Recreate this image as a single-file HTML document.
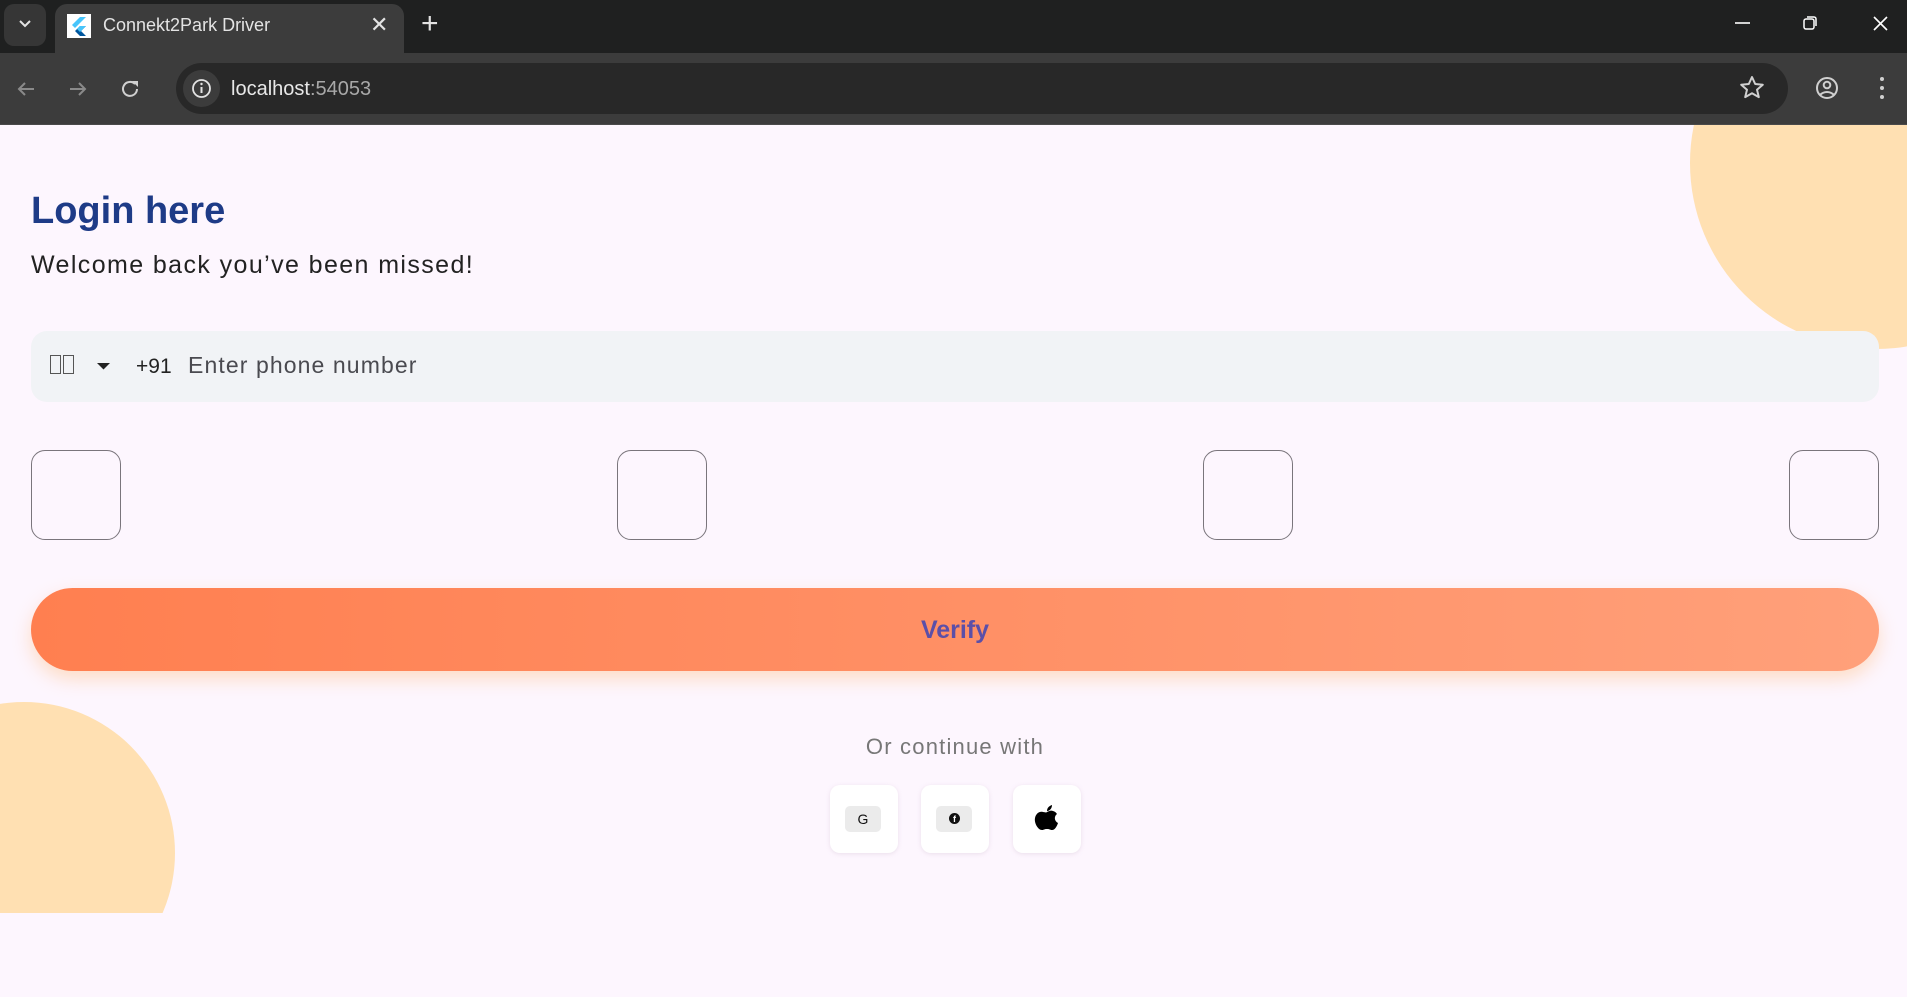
<!DOCTYPE html>
<html><head><meta charset="utf-8"><style>
*{margin:0;padding:0;box-sizing:border-box}
body{width:1907px;height:997px;overflow:hidden;background:#fdf6fe;font-family:"Liberation Sans",sans-serif;position:relative}
.abs{position:absolute}
#top{left:0;top:0;width:1907px;height:53px;background:#1f2020}
#tool{left:0;top:53px;width:1907px;height:72px;background:#3c3c3c;border-bottom:1px solid #4a4a4a}
#tab{left:55px;top:4px;width:349px;height:56px;background:#3c3c3c;border-radius:12px 12px 0 0}
#page{left:0;top:125px;width:1907px;height:872px;background:#fdf6fe;overflow:hidden}
.otp{position:absolute;top:325px;width:90px;height:90px;border:1.6px solid #7a757c;border-radius:14px}
.soc{position:absolute;top:660px;width:68px;height:68px;background:#fff;border-radius:10px;box-shadow:0 1px 4px rgba(200,180,200,.35)}
.pill{position:absolute;left:15px;top:21px;width:36px;height:26px;background:#ebebeb;border-radius:5px}
</style></head><body>
<div id="top" class="abs"></div>
<div class="abs" style="left:4px;top:4px;width:42px;height:42px;background:#363636;border-radius:10px"></div>
<svg class="abs" style="left:17px;top:18px" width="16" height="12"><path d="M3 3l5 5 5-5" stroke="#e3e3e3" stroke-width="2" fill="none"/></svg>
<div id="tab" class="abs"></div>
<div class="abs" style="left:67px;top:14px;width:24px;height:24px;background:#fff"></div>
<svg class="abs" style="left:67px;top:14px" width="24" height="24"><path d="M13 3L5 11l3 3L19 3z" fill="#47c5fb"/><path d="M13 12l-5 5 5 5h6l-5-5 5-5z" fill="#00569e"/><path d="M10 15l3 3 6-6h-6z" fill="#47c5fb"/></svg>
<div class="abs" style="left:103px;top:15px;color:#e3e3e3;font-size:18px">Connekt2Park Driver</div>
<div class="abs" style="left:370px;top:12px;color:#e3e3e3;font-size:22px">✕</div>
<div class="abs" style="left:421px;top:7px;color:#e3e3e3;font-size:30px;font-weight:300">+</div>
<svg class="abs" style="left:1730px;top:14px" width="170" height="20"><path d="M5 9h15" stroke="#fff" stroke-width="1.6"/><rect x="74" y="5" width="10" height="10" rx="2" stroke="#fff" stroke-width="1.5" fill="none"/><path d="M77 3h7a2 2 0 0 1 2 2v7" stroke="#fff" stroke-width="1.5" fill="none"/><path d="M144 3l13 13M157 3l-13 13" stroke="#fff" stroke-width="1.6"/></svg>
<div id="tool" class="abs"></div>
<svg class="abs" style="left:14px;top:78px" width="130" height="22"><path d="M20 11H5M11 5l-6 6 6 6" stroke="#8a8a8a" stroke-width="2" fill="none"/><path d="M56 11h15M65 5l6 6-6 6" stroke="#8a8a8a" stroke-width="2" fill="none"/><path d="M121 6a7 7 0 1 0 2 5" stroke="#d0d0d0" stroke-width="2" fill="none"/><path d="M118 3h6v6z" fill="#d0d0d0"/></svg>
<div class="abs" style="left:176px;top:63px;width:1612px;height:51px;background:#282828;border-radius:26px"></div>
<div class="abs" style="left:183px;top:70px;width:37px;height:37px;background:#3c3c3c;border-radius:50%"></div>
<svg class="abs" style="left:190px;top:77px" width="23" height="23"><circle cx="11.5" cy="11.5" r="8.5" stroke="#e3e3e3" stroke-width="1.8" fill="none"/><path d="M11.5 10v6" stroke="#e3e3e3" stroke-width="2"/><circle cx="11.5" cy="7" r="1.2" fill="#e3e3e3"/></svg>
<div class="abs" style="left:231px;top:78px;font-size:20px;color:#e8e8e8">localhost<span style="color:#a8a8a8">:54053</span></div>
<svg class="abs" style="left:1738px;top:74px" width="160" height="28"><path d="M14 3l3.2 7 7.6.7-5.8 5 1.8 7.4L14 19.2 7.2 23.1 9 15.7l-5.8-5L10.8 10z" stroke="#d0d0d0" stroke-width="2" fill="none" stroke-linejoin="round"/><circle cx="89" cy="14" r="10" stroke="#d0d0d0" stroke-width="2" fill="none"/><circle cx="89" cy="11" r="3.3" stroke="#d0d0d0" stroke-width="2" fill="none"/><path d="M82 21c4-4 10-4 14 0" stroke="#d0d0d0" stroke-width="2" fill="none"/><circle cx="144" cy="5" r="2" fill="#d0d0d0"/><circle cx="144" cy="14" r="2" fill="#d0d0d0"/><circle cx="144" cy="23" r="2" fill="#d0d0d0"/></svg>

<div id="page" class="abs">
 <div class="abs" style="left:1690px;top:-148px;width:372px;height:372px;border-radius:50%;background:#ffe0b2"></div>
 <div class="abs" style="left:0;top:577px;width:200px;height:211px;overflow:hidden"><div style="position:absolute;left:-127px;top:0;width:302px;height:302px;border-radius:50%;background:#ffe0b2"></div></div>
 <div class="abs" style="left:31px;top:65px;font-size:38px;font-weight:bold;color:#1e3b87">Login here</div>
 <div class="abs" style="left:31px;top:126px;font-size:25px;color:#222;letter-spacing:1.4px">Welcome back you’ve been missed!</div>
 <div class="abs" style="left:31px;top:206px;width:1848px;height:71px;background:#f1f3f6;border-radius:16px"></div>
 <div class="abs" style="left:50px;top:230px;width:11px;height:19px;border:1px solid #555"></div>
 <div class="abs" style="left:63px;top:230px;width:11px;height:19px;border:1px solid #555"></div>
 <svg class="abs" style="left:96px;top:236px" width="16" height="10"><path d="M1 2h13l-6.5 6.5z" fill="#222"/></svg>
 <div class="abs" style="left:136px;top:230px;font-size:21px;color:#222">+91</div>
 <div class="abs" style="left:188px;top:227px;font-size:23px;color:#4a4a50;letter-spacing:1.1px">Enter phone number</div>
 <div class="otp" style="left:31px"></div>
 <div class="otp" style="left:617px"></div>
 <div class="otp" style="left:1203px"></div>
 <div class="otp" style="left:1789px"></div>
 <div class="abs" style="left:31px;top:463px;width:1848px;height:83px;border-radius:42px;background:linear-gradient(90deg,#ff7f50,#ffa07a);box-shadow:0 8px 18px rgba(255,190,130,.45);text-align:center;line-height:85px;font-size:25px;font-weight:bold;color:#5b4fa8">Verify</div>
 <div class="abs" style="left:0;width:1910px;top:609px;text-align:center;font-size:22px;color:#777;letter-spacing:1.2px">Or continue with</div>
 <div class="soc" style="left:830px"><div class="pill"></div><div class="abs" style="left:15px;top:26px;width:36px;text-align:center;font-size:14px;color:#111">G</div></div>
 <div class="soc" style="left:921px"><div class="pill"></div><div class="abs" style="left:28px;top:28px;width:11px;height:11px;border-radius:50%;background:#111;color:#fff;font-size:9px;font-weight:bold;text-align:center;line-height:12px">f</div></div>
 <div class="soc" style="left:1013px"><svg class="abs" style="left:20px;top:18px" width="28" height="32" viewBox="0 0 28 32"><path d="M14 9c2-1 4-2 6-1 2 .5 3 1.5 4 3-3 2-3 7 1 9-1 3-3 7-6 7-2 0-2-1-5-1s-3 1-5 1C5 27 1 20 2 15c1-5 5-7 8-6 2 0 3 1 4 0z" fill="#000"/><path d="M14 8c0-3 2-5 5-6 0 3-2 6-5 6z" fill="#000"/></svg></div>
</div>
</body></html>
